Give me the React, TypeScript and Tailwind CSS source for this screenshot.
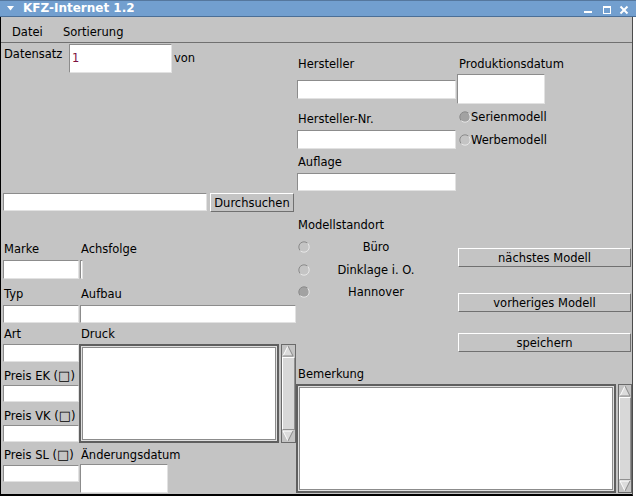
import React from "react";

type P = { className?: string; children?: React.ReactNode };

const Field = ({ className = "", children }: P) => (
  <div
    className={`bg-white border border-t-[#8c8c8c] border-l-[#8c8c8c] border-r-[#e2e2e2] border-b-[#e2e2e2] ${className}`}
  >
    {children}
  </div>
);

const Label = ({ className = "", children }: P) => (
  <div className={`h-[14px] leading-[14px] whitespace-nowrap ${className}`}>{children}</div>
);

const Button = ({ className = "", children }: P) => (
  <div
    className={`flex items-center justify-center leading-[14px] border border-t-white border-l-white border-r-[#707070] border-b-[#707070] ${className}`}
  >
    {children}
  </div>
);

const TextArea = ({ className = "" }: P) => (
  <div className={`border-2 border-[#5f5f5f] ${className}`}>
    <div className="h-full border border-[#e0e0e0]">
      <div className="h-full border border-[#8c8c8c] bg-white" />
    </div>
  </div>
);

const Arrow = ({ up }: { up?: boolean }) =>
  up ? (
    <svg width="12" height="12" viewBox="0 0 12 12" className="shrink-0">
      <polygon points="6,1 11,11 1,11" fill="#dcdcdc" />
      <line x1="1" y1="11" x2="6" y2="1" stroke="#ffffff" />
      <line x1="6" y1="1" x2="11" y2="11" stroke="#8a8a8a" />
      <line x1="1" y1="11" x2="11" y2="11" stroke="#8a8a8a" />
    </svg>
  ) : (
    <svg width="12" height="12" viewBox="0 0 12 12" className="shrink-0">
      <polygon points="1,1 11,1 6,11" fill="#dcdcdc" />
      <line x1="1" y1="1" x2="11" y2="1" stroke="#ffffff" />
      <line x1="1" y1="1" x2="6" y2="11" stroke="#ffffff" />
      <line x1="11" y1="1" x2="6" y2="11" stroke="#8a8a8a" />
    </svg>
  );

const ScrollBar = ({ className = "" }: P) => (
  <div className={`flex flex-col border border-[#6a6a6a] bg-[#c4c4c4] ${className}`}>
    <Arrow up />
    <div className="flex-1 border border-t-white border-l-white border-r-[#909090] border-b-[#909090] bg-[#d8d8d8]" />
    <Arrow />
  </div>
);

const Radio = ({ on }: { on?: boolean }) => (
  <svg width="12" height="12" viewBox="0 0 12 12" className="shrink-0">
    <circle cx="6" cy="6" r="5.2" fill={on ? "#a2a2a2" : "#c4c4c4"} />
    <path d="M2.32 9.68 A5.2 5.2 0 0 1 9.68 2.32" stroke="#8a8a8a" fill="none" />
    <path d="M9.68 2.32 A5.2 5.2 0 0 1 2.32 9.68" stroke="#e8e8e8" fill="none" />
  </svg>
);

// missing-glyph box as rendered for the euro sign
const Box = () => <span className="text-[13px] leading-[14px]">□</span>;

export default function App() {
  return (
    <div className="w-[636px] h-[502px] overflow-hidden bg-white text-black text-[11.5px] font-['DejaVu_Sans',sans-serif]">
      {/* title bar */}
      <div className="h-[17px] flex items-center bg-[#729fcf] border-t border-t-[#55779d] border-b border-b-[#4b6f97] text-white">
        <svg className="ml-[7px]" width="7" height="5" viewBox="0 0 7 5">
          <polygon points="0,0 7,0 3.5,4.5" fill="#ffffff" />
        </svg>
        <span className="ml-[9px] font-bold text-[12px] leading-[15px]">KFZ-Internet 1.2</span>
        <svg className="ml-auto mr-[6px]" width="46" height="15" viewBox="0 0 46 15">
          <rect x="0" y="10" width="8" height="2" fill="#ffffff" />
          <rect x="19.5" y="5.5" width="7" height="7" stroke="#ffffff" fill="none" />
          <rect x="19" y="5" width="8" height="2" fill="#ffffff" />
          <line x1="36.5" y1="5.5" x2="43.5" y2="12.5" stroke="#ffffff" strokeWidth="2" />
          <line x1="43.5" y1="5.5" x2="36.5" y2="12.5" stroke="#ffffff" strokeWidth="2" />
        </svg>
      </div>

      <div className="w-[633px] border-l border-l-black border-r border-r-[#4c4c4c] border-b-2 border-b-black bg-[#c4c4c4]">
        {/* menu bar */}
        <div className="h-[26px] flex pl-[11px] pt-[8px] border-b border-b-[#707070]">
          <Label className="w-[51px]">Datei</Label>
          <Label>Sortierung</Label>
        </div>

        {/* content */}
        <div className="h-[451px] flex">
          {/* left column */}
          <div className="w-[295px] pl-[2px] flex flex-col">
            <div className="mt-[1px] h-[29px] flex items-start">
              <Label className="w-[66px] pl-[1px] mt-[3px]">Datensatz</Label>
              <Field className="w-[103px] h-[29px] pl-[2px]">
                <Label className="mt-[6px] text-[#7d1040]">1</Label>
              </Field>
              <Label className="ml-[2px] mt-[7px]">von</Label>
            </div>

            <div className="mt-[120px] h-[19px] flex items-start">
              <Field className="w-[204px] h-[18px]" />
              <Button className="ml-[3px] w-[84px] h-[19px]">Durchsuchen</Button>
            </div>

            <div className="mt-[30px] flex">
              <Label className="w-[77px] pl-[1px]">Marke</Label>
              <Label className="pl-[1px]">Achsfolge</Label>
            </div>
            <div className="mt-[4px] flex">
              <Field className="w-[76px] h-[19px]" />
              <Field className="ml-[1px] w-[3px] h-[19px]" />
            </div>

            <div className="mt-[8px] flex">
              <Label className="w-[77px] pl-[1px]">Typ</Label>
              <Label className="pl-[1px]">Aufbau</Label>
            </div>
            <div className="mt-[4px] flex">
              <Field className="w-[76px] h-[18px]" />
              <Field className="ml-[1px] w-[216px] h-[18px]" />
            </div>

            <div className="mt-[4px] flex">
              <Label className="w-[77px] pl-[1px]">Art</Label>
              <Label className="pl-[1px]">Druck</Label>
            </div>

            <div className="mt-[3px] flex">
              <div className="w-[76px] flex flex-col">
                <Field className="h-[18px]" />
                <Label className="mt-[7px] pl-[1px]">Preis EK (<Box />)</Label>
                <Field className="mt-[2px] h-[17px]" />
                <Label className="mt-[7px] pl-[1px]">Preis VK (<Box />)</Label>
                <Field className="mt-[2px] h-[17px]" />
                <Label className="mt-[6px] pl-[1px]">Preis SL (<Box />)</Label>
                <Field className="mt-[3px] h-[17px]" />
              </div>
              <div className="w-[217px] flex flex-col">
                <div className="h-[99px] flex">
                  <TextArea className="w-[200px] h-full" />
                  <ScrollBar className="ml-[2px] w-[15px] h-full" />
                </div>
                <Label className="mt-[5px] pl-[2px]">Änderungsdatum</Label>
                <Field className="mt-[2px] ml-[1px] w-[88px] h-[29px]" />
              </div>
            </div>
          </div>

          {/* right part */}
          <div className="w-[336px] flex flex-col">
            <div className="flex">
              {/* middle column */}
              <div className="w-[161px] pl-[1px] flex flex-col">
                <Label className="mt-[14px] pl-[1px]">Hersteller</Label>
                <Field className="mt-[9px] w-[159px] h-[19px]" />
                <Label className="mt-[13px] pl-[1px]">Hersteller-Nr.</Label>
                <Field className="mt-[4px] w-[159px] h-[19px]" />
                <Label className="mt-[6px] pl-[1px]">Auflage</Label>
                <Field className="mt-[4px] w-[159px] h-[18px]" />
                <Label className="mt-[27px] pl-[1px]">Modellstandort</Label>
                <div className="mt-[4px] h-[22px] flex items-center pl-[1px]">
                  <Radio />
                  <Label className="ml-[2px] w-[128px] text-center">Büro</Label>
                </div>
                <div className="mt-[1px] h-[22px] flex items-center pl-[1px]">
                  <Radio />
                  <Label className="ml-[2px] w-[128px] text-center">Dinklage i. O.</Label>
                </div>
                <div className="h-[22px] flex items-center pl-[1px]">
                  <Radio on />
                  <Label className="ml-[2px] w-[128px] text-center">Hannover</Label>
                </div>
              </div>

              {/* right column */}
              <div className="w-[175px] flex flex-col">
                <Label className="mt-[14px] pl-[2px]">Produktionsdatum</Label>
                <Field className="mt-[3px] w-[88px] h-[30px]" />
                <div className="mt-[2px] h-[22px] flex items-center pl-[2px]">
                  <Radio on />
                  <Label>Serienmodell</Label>
                </div>
                <div className="mt-[1px] h-[22px] flex items-center pl-[2px]">
                  <Radio />
                  <Label>Werbemodell</Label>
                </div>
                <Button className="mt-[97px] ml-[1px] w-[173px] h-[19px]">nächstes Modell</Button>
                <Button className="mt-[26px] ml-[1px] w-[173px] h-[19px]">vorheriges Modell</Button>
                <Button className="mt-[21px] ml-[1px] w-[173px] h-[19px]">speichern</Button>
              </div>
            </div>

            <Label className="mt-[15px] pl-[2px]">Bemerkung</Label>
            <div className="mt-[3px] h-[109px] flex">
              <TextArea className="w-[320px] h-full" />
              <ScrollBar className="ml-[2px] w-[14px] h-full" />
            </div>
          </div>
        </div>
      </div>
    </div>
  );
}
